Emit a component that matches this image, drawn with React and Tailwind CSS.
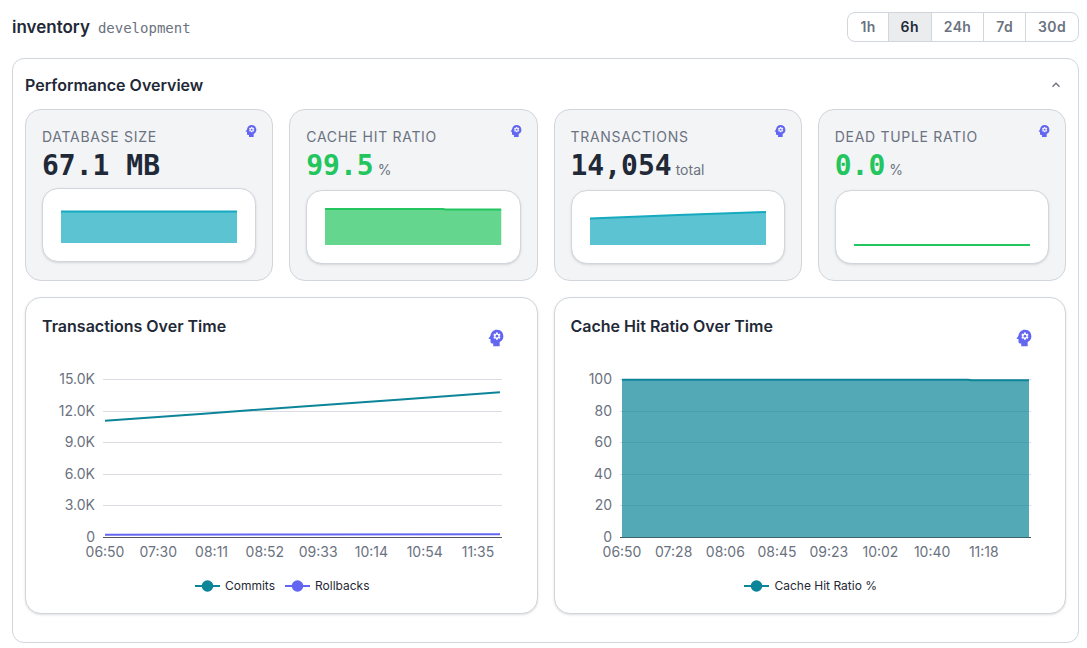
import { useLayoutEffect, useRef, useState } from "react";
import { MdExpandLess, MdPsychology } from "react-icons/md";

const RANGES = ["1h", "6h", "24h", "7d", "30d"];

const STATS = [
  {
    label: "Database Size",
    value: "67.1 MB",
    tone: "text-[#1f2937]",
    color: "#15aabf",
    points: [[0, 22.5], [176, 22.5]],
  },
  {
    label: "Cache Hit Ratio",
    value: "99.5",
    unit: "%",
    tone: "text-[#22c55e]",
    color: "#22c55e",
    points: [[0, 18], [118, 18], [120, 18.5], [176, 18.5]],
  },
  {
    label: "Transactions",
    value: "14,054",
    unit: "total",
    tone: "text-[#1f2937]",
    color: "#15aabf",
    points: [[0, 27.5], [88, 24], [176, 21]],
  },
  {
    label: "Dead Tuple Ratio",
    value: "0.0",
    unit: "%",
    tone: "text-[#22c55e]",
    color: "#22c55e",
    points: [[0, 54], [176, 54]],
  },
];

const CHARTS = [
  {
    title: "Transactions Over Time",
    left: 61,
    max: 15000,
    yLabels: ["15.0K", "12.0K", "9.0K", "6.0K", "3.0K", "0"],
    xLabels: ["06:50", "07:30", "08:11", "08:52", "09:33", "10:14", "10:54", "11:35"],
    step: 0.1349,
    series: [
      {
        name: "Commits",
        color: "#0c8599",
        data: [[0, 11080], [0.25, 11760], [0.5, 12440], [0.75, 13110], [1, 13780]],
      },
      { name: "Rollbacks", color: "#6366f1", data: [[0, 265], [0.5, 290], [1, 310]] },
    ],
  },
  {
    title: "Cache Hit Ratio Over Time",
    left: 49,
    max: 100,
    yLabels: ["100", "80", "60", "40", "20", "0"],
    xLabels: ["06:50", "07:28", "08:06", "08:45", "09:23", "10:02", "10:40", "11:18"],
    step: 0.127,
    series: [
      {
        name: "Cache Hit Ratio %",
        color: "#0c8599",
        area: true,
        data: [[0, 99.9], [0.85, 99.9], [0.86, 99.6], [1, 99.6]],
      },
    ],
  },
];

const toPath = (points) => "M" + points.map((p) => p.join(" ")).join("L");

function Sparkline({ points, color }) {
  const line = toPath(points);
  return (
    <div className="rounded-2xl border border-gray-300 bg-white px-[18px] shadow-sm">
      <svg
        className="block h-[72px] w-full"
        viewBox="0 0 176 72"
        preserveAspectRatio="none"
        aria-hidden="true"
      >
        <path d={`${line}L176 54L0 54Z`} fill={color} fillOpacity="0.7" />
        <path d={line} fill="none" stroke={color} strokeWidth="2" vectorEffect="non-scaling-stroke" />
      </svg>
    </div>
  );
}

function StatCard({ stat }) {
  return (
    <section className="relative rounded-2xl border border-gray-300 bg-gray-100 p-4">
      <button
        type="button"
        aria-label={`Analyze ${stat.label}`}
        className="absolute top-[9px] right-[9px] p-1 text-[#6366f1]"
      >
        <MdPsychology size={16} />
      </button>
      <h3 className="text-sm leading-[22px] tracking-wider text-[#6b7280] uppercase">
        {stat.label}
      </h3>
      <p className="mb-1 flex items-baseline gap-1">
        <span
          className={`font-['DejaVu_Sans_Mono',monospace] text-[28px] leading-9 font-bold ${stat.tone}`}
        >
          {stat.value}
        </span>
        {stat.unit && <span className="text-sm leading-8 text-[#6b7280]">{stat.unit}</span>}
      </p>
      <Sparkline points={stat.points} color={stat.color} />
    </section>
  );
}

function Plot({ chart }) {
  const ref = useRef(null);
  const [width, setWidth] = useState(479);

  useLayoutEffect(() => {
    const measure = () => setWidth(Math.round(ref.current.clientWidth));
    measure();
    const observer = new ResizeObserver(measure);
    observer.observe(ref.current);
    return () => observer.disconnect();
  }, []);

  const top = 41;
  const bottom = 199;
  const right = width - 19;
  const x0 = chart.left + 2;
  const span = right - 2 - x0;
  const x = (f) => x0 + f * span;
  const y = (v) => bottom + 0.5 - (v / chart.max) * (bottom - top);
  const rows = chart.yLabels.length - 1;

  return (
    <div ref={ref}>
      <svg className="block h-[238px] w-full" role="img" aria-label={chart.title}>
        {chart.yLabels.map((label, i) => {
          const gy = Math.round(top + ((bottom - top) * i) / rows) + 0.5;
          return (
            <g key={label}>
              <line
                x1={chart.left}
                x2={right}
                y1={gy}
                y2={gy}
                stroke={i === rows ? "#54555a" : "#dbdde4"}
              />
              <text x={chart.left - 8} y={gy + 4} textAnchor="end" className="fill-[#6b7280] text-sm">
                {label}
              </text>
            </g>
          );
        })}
        {chart.xLabels.map((label, i) => (
          <text
            key={label}
            x={x(i * chart.step)}
            y={219}
            textAnchor="middle"
            className="fill-[#6b7280] text-sm"
          >
            {label}
          </text>
        ))}
        {chart.series.map((s) => {
          const line = toPath(s.data.map(([f, v]) => [x(f), y(v)]));
          return (
            <g key={s.name}>
              {s.area && (
                <path
                  d={`${line}L${x(1)} ${y(0)}L${x(0)} ${y(0)}Z`}
                  fill={s.color}
                  fillOpacity="0.7"
                />
              )}
              <path d={line} fill="none" stroke={s.color} strokeWidth="2" />
            </g>
          );
        })}
      </svg>
    </div>
  );
}

function ChartCard({ chart }) {
  return (
    <section className="relative min-w-0 rounded-2xl border border-gray-300 bg-white p-4 shadow-sm">
      <h3 className="text-base leading-6 font-semibold text-[#1f2937]">{chart.title}</h3>
      <button
        type="button"
        aria-label={`Analyze ${chart.title}`}
        className="absolute top-[21px] right-[22px] p-2 text-[#6366f1]"
      >
        <MdPsychology size={22} />
      </button>
      <Plot chart={chart} />
      <ul className="mb-0.5 flex h-[19px] items-center justify-center gap-2.5 pl-0.5">
        {chart.series.map((s) => (
          <li key={s.name} className="flex items-center gap-[5px] text-xs text-[#1f2937]">
            <svg width="25" height="14" aria-hidden="true">
              <path d="M0 7H25" stroke={s.color} strokeWidth="2" />
              <circle cx="12.5" cy="7" r="5.8" fill={s.color} />
            </svg>
            {s.name}
          </li>
        ))}
      </ul>
    </section>
  );
}

export default function App() {
  const [range, setRange] = useState("6h");
  const [open, setOpen] = useState(true);

  return (
    <main className="bg-white pt-3 pr-2 pb-1 pl-3 font-['Inter',sans-serif] text-[#1f2937]">
      <header className="mb-4 flex items-center justify-between">
        <div className="flex items-baseline gap-2">
          <h1 className="text-[17px] leading-7 font-semibold">inventory</h1>
          <span className="font-['DejaVu_Sans_Mono',monospace] text-sm text-[#6b7280]">
            development
          </span>
        </div>
        <div
          role="group"
          aria-label="Time range"
          className="flex h-[30px] divide-x divide-gray-300 overflow-hidden rounded-lg border border-gray-300"
        >
          {RANGES.map((r) => (
            <button
              key={r}
              type="button"
              aria-pressed={r === range}
              onClick={() => setRange(r)}
              className={
                r === range
                  ? "bg-[#ebecee] px-3 text-sm font-semibold tracking-wide text-[#1f2937]"
                  : "px-3 text-sm font-semibold tracking-wide text-[#6b7280]"
              }
            >
              {r}
            </button>
          ))}
        </div>
      </header>

      <section className="rounded-xl border border-gray-300 px-3 pt-3 pb-7">
        <div className="mb-2.5 flex h-7 items-center justify-between">
          <h2 className="text-base leading-7 font-semibold">Performance Overview</h2>
          <button
            type="button"
            aria-label="Toggle performance overview"
            aria-expanded={open}
            onClick={() => setOpen(!open)}
            className="p-0.5 text-[#6b7280]"
          >
            <MdExpandLess size={16} className={open ? "" : "rotate-180"} />
          </button>
        </div>
        {open && (
          <div className="grid gap-4">
            <div className="grid grid-cols-2 gap-4 md:grid-cols-4">
              {STATS.map((s) => (
                <StatCard key={s.label} stat={s} />
              ))}
            </div>
            <div className="grid gap-4 md:grid-cols-2">
              {CHARTS.map((c) => (
                <ChartCard key={c.title} chart={c} />
              ))}
            </div>
          </div>
        )}
      </section>
    </main>
  );
}
